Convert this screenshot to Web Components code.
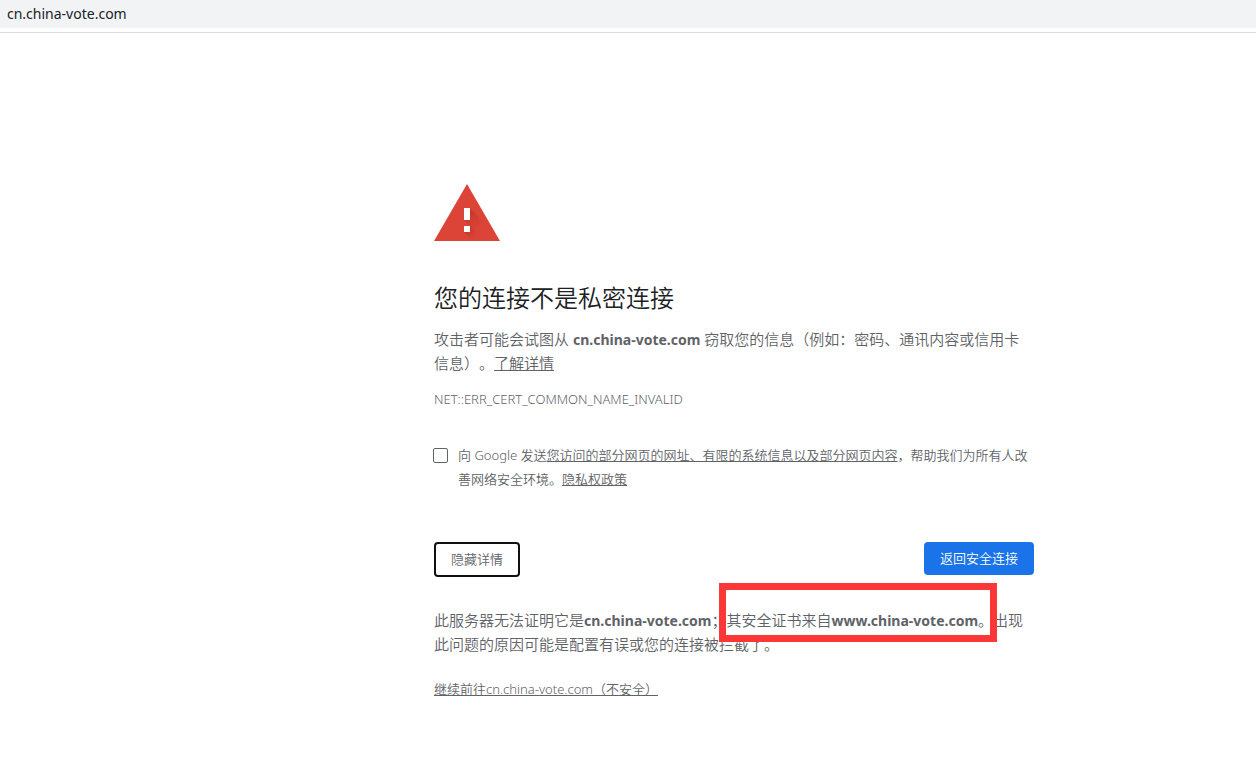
<!DOCTYPE html>
<html lang="zh-CN">
<head>
<meta charset="utf-8">
<meta name="viewport" content="width=device-width, initial-scale=1">
<title>隐私设置错误</title>
<style>
  body {
    margin: 0;
    background: #fff;
    color: #5f6368;
    font: 350 15px/24px "Noto Sans", "Noto Sans CJK SC", sans-serif;
    text-spacing-trim: space-all;
  }
</style>
</head>
<body>
<address-bar>cn.china-vote.com</address-bar>
<security-warning></security-warning>

<script>
class BaseElement extends HTMLElement {
  constructor() {
    super();
    this.attachShadow({ mode: "open" }).innerHTML = this.constructor.markup.trim();
  }
}

customElements.define("address-bar", class extends BaseElement {
  static markup = `
    <style>
      :host { display: block; padding-bottom: 4px; border-bottom: 1px solid #dadce0; }
      header { height: 28px; padding: 0 7px; background: #f1f3f4; color: #202124; font-size: 14px; font-weight: 400; line-height: 28px; }
    </style>
    <header><slot></slot></header>`;
});

customElements.define("warning-icon", class extends BaseElement {
  static markup = `
    <style>
      :host { display: block; }
      svg { display: block; width: 66px; height: 57px; }
    </style>
    <svg viewBox="0 0 66 57" aria-hidden="true">
      <defs>
        <linearGradient id="shade" x1="32" y1="30" x2="45" y2="43" gradientUnits="userSpaceOnUse">
          <stop offset="0" stop-color="#a52714" stop-opacity=".4"/>
          <stop offset="1" stop-color="#a52714" stop-opacity="0"/>
        </linearGradient>
        <linearGradient id="dot-shade" x1="33" y1="45" x2="41" y2="53" gradientUnits="userSpaceOnUse">
          <stop offset="0" stop-color="#a52714" stop-opacity=".4"/>
          <stop offset="1" stop-color="#a52714" stop-opacity="0"/>
        </linearGradient>
      </defs>
      <path d="M33 0 66 57H0z" fill="#db4437"/>
      <path d="M36 24 54 42 49 55 30 36z" fill="url(#shade)"/>
      <path d="M36 42 51 57H39L30 48z" fill="url(#dot-shade)"/>
      <path d="M30 24h6v12h-6zM30 42h6v6h-6z" fill="#fff"/>
    </svg>`;
});

customElements.define("text-link", class extends BaseElement {
  static markup = `<style>
      :host { display: inline; }
      a { color: inherit; text-decoration: underline; }
    </style><a href="#"><slot></slot></a>`;
});

customElements.define("action-button", class extends BaseElement {
  static markup = `
    <style>
      :host { display: block; }
      button {
        display: block; margin: 0; padding: 6px 16px; border: 0; border-radius: 4px;
        background: #1a73e8; color: #fff; font: inherit; font-size: 13px; line-height: 21px;
      }
      :host([kind="outline"]) button {
        padding: 5px 15px; border: 2px solid #101010; background: #fff; color: #5f6368;
      }
    </style>
    <button type="button"><slot></slot></button>`;
});

customElements.define("report-option", class extends BaseElement {
  static markup = `
    <style>
      :host { display: flex; gap: 10px; font-size: 13px; }
      input {
        appearance: none; flex: none; box-sizing: border-box; width: 15px; height: 15px;
        margin: 5px 0 0 -1px; border: 1px solid #5f6368; border-radius: 2px; background: #fff;
      }
      input:checked { background: #1a73e8; }
    </style>
    <input type="checkbox" id="opt">
    <label for="opt"><slot></slot></label>`;
});

customElements.define("highlight-frame", class extends BaseElement {
  static markup = `
    <style>
      :host {
        position: absolute; left: 285px; top: -25px; box-sizing: border-box;
        width: 278px; height: 59px; border: 7px solid #fc3737; pointer-events: none;
      }
    </style>`;
});

customElements.define("security-warning", class extends BaseElement {
  static markup = `
    <style>
      :host {
        display: grid; grid-template-columns: 434fr minmax(0, 600px) 222fr;
        padding: 151px 0 64px;
      }
      main { grid-column: 2; }
      h1 { margin: 41px 0 14px; color: #202124; font-size: 24px; font-weight: inherit; line-height: 31px; }
      p { margin: 0; }
      strong { font-size: 14px; font-weight: 700; line-height: 20px; }
      .small { font-size: 13px; }
      .code { margin-top: 12px; font-weight: 300; }
      report-option { margin-top: 32px; }
      .actions { display: flex; justify-content: space-between; align-items: flex-start; margin-top: 51px; }
      .details { position: relative; margin-top: 31px; }
      .proceed { margin-top: 21px; }
    </style>
    <main>
      <warning-icon></warning-icon>
      <h1>您的连接不是私密连接</h1>
      <p>攻击者可能会试图从 <strong>cn.china-vote.com</strong> 窃取您的信息（例如：密码、通讯内容或信用卡信息）。<text-link>了解详情</text-link></p>
      <p class="small code">NET::ERR_CERT_COMMON_NAME_INVALID</p>
      <report-option>向 Google 发送<text-link>您访问的部分网页的网址、有限的系统信息以及部分网页内容</text-link>，帮助我们为所有人改善网络安全环境。<text-link>隐私权政策</text-link></report-option>
      <div class="actions">
        <action-button kind="outline">隐藏详情</action-button>
        <action-button>返回安全连接</action-button>
      </div>
      <p class="details">此服务器无法证明它是<strong>cn.china-vote.com</strong>；其安全证书来自<strong>www.china-vote.com</strong>。出现此问题的原因可能是配置有误或您的连接被拦截了。<highlight-frame></highlight-frame></p>
      <p class="small proceed"><text-link>继续前往cn.china-vote.com（不安全）</text-link></p>
    </main>`;
});
</script>
</body>
</html>
